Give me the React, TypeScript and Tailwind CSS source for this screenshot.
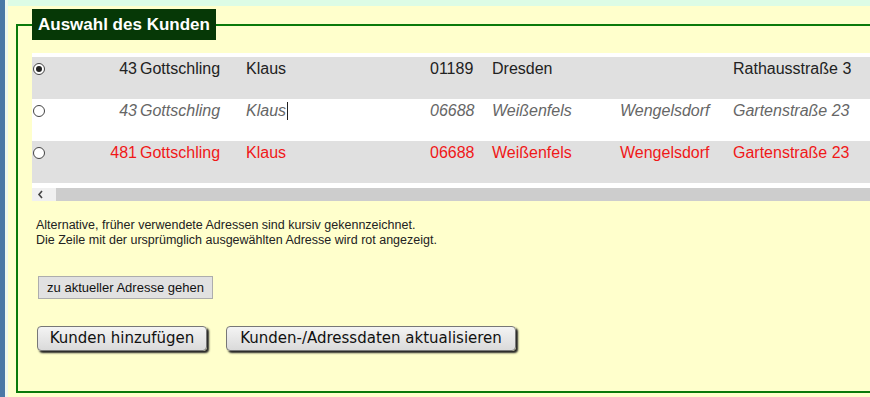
import React from 'react';

type Row = {
  nr: string;
  name: string;
  vorname: string;
  plz: string;
  ort: string;
  ortsteil: string;
  strasse: string;
  bg: string;
  tone: 'normal' | 'alt' | 'red';
  checked?: boolean;
  cursor?: boolean;
};

const rows: Row[] = [
  { nr: '43', name: 'Gottschling', vorname: 'Klaus', plz: '01189', ort: 'Dresden', ortsteil: '', strasse: 'Rathausstraße 3', bg: 'bg-[#e0e0e0]', tone: 'normal', checked: true },
  { nr: '43', name: 'Gottschling', vorname: 'Klaus', plz: '06688', ort: 'Weißenfels', ortsteil: 'Wengelsdorf', strasse: 'Gartenstraße 23', bg: 'bg-white', tone: 'alt', cursor: true },
  { nr: '481', name: 'Gottschling', vorname: 'Klaus', plz: '06688', ort: 'Weißenfels', ortsteil: 'Wengelsdorf', strasse: 'Gartenstraße 23', bg: 'bg-[#e0e0e0]', tone: 'red' },
];

const toneClass = {
  normal: 'text-[#222]',
  alt: 'text-[#666] italic',
  red: 'text-[#f01818]',
};

function Radio({ checked }: { checked?: boolean }) {
  return (
    <span className="mt-[3px] ml-[1px] w-[12px] h-[12px] rounded-full border border-[#444] bg-white flex items-center justify-center">
      {checked && <span className="w-[6px] h-[6px] rounded-full bg-[#222]" />}
    </span>
  );
}

function CustomerRow({ row }: { row: Row }) {
  return (
    <div className={`flex items-start h-[42px] pt-[3px] text-[16px] leading-[18px] whitespace-nowrap ${row.bg} ${toneClass[row.tone]}`}>
      <div className="w-[24px] shrink-0">
        <Radio checked={row.checked} />
      </div>
      <div className="w-[81px] shrink-0 text-right">{row.nr}</div>
      <div className="w-[106px] shrink-0 ml-[3px]">{row.name}</div>
      <div className="w-[184px] shrink-0 flex items-start">
        {row.vorname}
        {row.cursor && <span className="ml-[1px] w-px h-[18px] bg-[#222]" />}
      </div>
      <div className="w-[62px] shrink-0">{row.plz}</div>
      <div className="w-[128px] shrink-0">{row.ort}</div>
      <div className="w-[113px] shrink-0">{row.ortsteil}</div>
      <div className="shrink-0">{row.strasse}</div>
    </div>
  );
}

export default function App() {
  return (
    <div className="w-[870px] h-[397px] overflow-hidden flex bg-[#ffffcc] font-['Liberation_Sans',Arial,sans-serif]">
      <div className="w-[5px] shrink-0 bg-[#4a78a6]" />
      <div className="w-[3px] shrink-0 bg-[#eef8ee]" />
      <div className="flex-1 flex flex-col min-w-0">
        <div className="h-[6px] shrink-0 bg-[#dcfce6]" />
        <div className="flex-1 pl-[8px] pt-[3px]">
          <fieldset className="w-[900px] h-[384px] border-2 border-solid border-[#0a7a0a] pl-[14px] m-0">
            <legend className="bg-[#063806] text-white font-bold text-[17px] px-[6px] leading-[31px]">
              Auswahl des Kunden
            </legend>

            {/* Kundentabelle mit horizontalem Scrollbalken */}
            <div className="mt-[13px] w-[854px] flex flex-col">
              <div className="h-[135px] overflow-hidden">
                <div className="h-[4px] bg-white" />
                {rows.map((r, i) => (
                  <CustomerRow key={i} row={r} />
                ))}
                <div className="h-[5px] bg-white" />
              </div>
              <div className="h-[13px] flex">
                <div className="w-[24px] bg-[#f0f0f0] flex items-center pl-[5px]">
                  <svg width="7" height="9" viewBox="0 0 7 9">
                    <path d="M5 1L2 4.5L5 8" fill="none" stroke="#444" strokeWidth="1.6" />
                  </svg>
                </div>
                <div className="flex-1 bg-[#cdcdcd]" />
              </div>
            </div>

            <p className="mt-[17px] pl-[4px] text-[12.5px] leading-[15px] text-[#222]">
              Alternative, früher verwendete Adressen sind kursiv gekennzeichnet.
              <br />
              Die Zeile mit der ursprümglich ausgewählten Adresse wird rot angezeigt.
            </p>

            <button className="mt-[28px] ml-[6px] w-[175px] h-[23px] bg-[#e1e1e1] border border-[#adadad] text-[13px] text-[#111] block">
              zu aktueller Adresse gehen
            </button>

            <div className="mt-[27px] ml-[5px] flex gap-[19px] font-['DejaVu_Sans',Verdana,sans-serif] text-[15px] text-[#111]">
              <button className="w-[170px] h-[25px] rounded-[4px] border border-[#777] bg-gradient-to-b from-[#f4f4f4] to-[#dadada] shadow-[2px_2px_2px_#222]">
                Kunden hinzufügen
              </button>
              <button className="w-[290px] h-[25px] rounded-[4px] border border-[#777] bg-gradient-to-b from-[#f4f4f4] to-[#dadada] shadow-[2px_2px_2px_#222]">
                Kunden-/Adressdaten aktualisieren
              </button>
            </div>
          </fieldset>
        </div>
      </div>
    </div>
  );
}
